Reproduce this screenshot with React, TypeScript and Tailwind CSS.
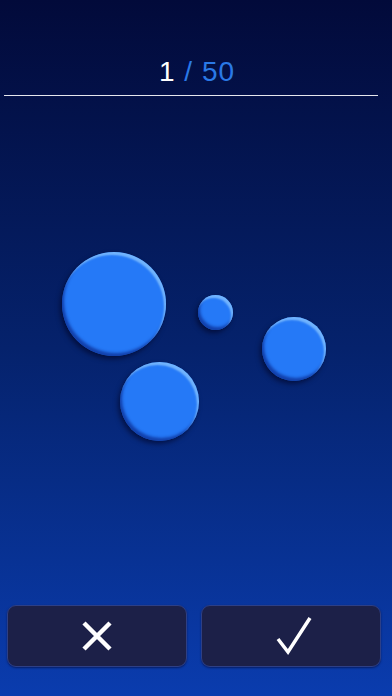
import React from "react";

const circles = [
  { cx: 113.5, cy: 305, r: 52 },
  { cx: 215, cy: 313.5, r: 17.5 },
  { cx: 293.5, cy: 350, r: 32 },
  { cx: 159, cy: 402.5, r: 39.5 },
];

export default function App() {
  return (
    <div
      className="relative flex h-[696px] w-[392px] flex-col overflow-hidden bg-[linear-gradient(180deg,#020a3a_0%,#05226c_50%,#0a3cae_100%)]"
      style={{ fontFamily: '"Liberation Sans", Arial, sans-serif' }}
    >
      <div className="flex h-[96px] flex-col justify-end">
        <div className="mb-[6px] pl-[2px] text-center text-[28px] leading-[34px] tracking-[1px]">
          <span className="text-white">1</span>
          <span className="text-[#2a79e6]"> / 50</span>
        </div>
        <div className="ml-[4px] mr-[14px] h-[1.5px] bg-white/90" />
      </div>

      <div className="relative flex-1">
        {circles.map((c, i) => (
          <div
            key={i}
            className="absolute rounded-full bg-[#2579f7] shadow-[inset_-2px_3px_2px_rgba(140,200,255,0.75),inset_2px_-3px_3px_rgba(10,40,140,0.7),-2px_3px_5px_rgba(0,0,30,0.55)]"
            style={{
              left: c.cx - c.r,
              top: c.cy - c.r - 97.5,
              width: c.r * 2,
              height: c.r * 2,
            }}
          />
        ))}
      </div>

      <div className="flex gap-[14px] pl-[7px] pr-[11px] pb-[29px]">
        <button className="flex h-[62px] flex-1 items-center justify-center rounded-[9px] border border-[#2d3f86] bg-[#1c2048] shadow-[0_1px_2px_rgba(0,0,40,0.5)]">
          <svg width="32" height="32" viewBox="0 0 32 32">
            <path d="M3 3 L29 29 M29 3 L3 29" stroke="white" strokeWidth="4.5" strokeLinecap="butt" />
          </svg>
        </button>
        <button className="flex h-[62px] flex-1 items-center justify-center rounded-[9px] border border-[#2d3f86] bg-[#1c2048] shadow-[0_1px_2px_rgba(0,0,40,0.5)]">
          <svg width="38" height="40" viewBox="0 0 38 40" className="ml-[6px]">
            <path d="M3 23 L13 36 L35 2" stroke="white" strokeWidth="3.5" fill="none" strokeLinejoin="miter" />
          </svg>
        </button>
      </div>
    </div>
  );
}
